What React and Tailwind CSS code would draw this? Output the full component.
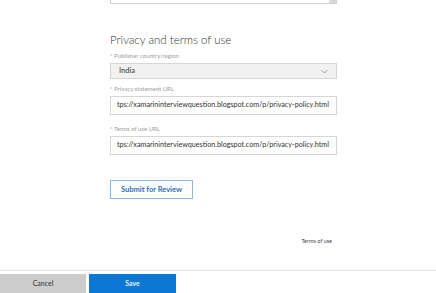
export default function App() {
  const font = { fontFamily: 'Lato, "Open Sans", sans-serif' };
  return (
    <div className="w-[436px] h-[293px] bg-white flex flex-col overflow-hidden relative" style={font}>
      <div className="flex-1 flex flex-col pl-[110px] pr-[99px]">
        <div className="h-[4px] border border-t-0 border-[#d0d0d0] relative">
          <div className="absolute right-[0px] top-0 w-[7px] h-[3px] bg-[#d8d8d8]"></div>
        </div>
        <div className="mt-[27px] text-[11.5px] leading-[18px] text-[#333] font-light">Privacy and terms of use</div>
        <div className="mt-[3px] text-[6px] leading-[8px] text-[#a0a0a0]">* Publisher country/region</div>
        <div className="mt-[3px] h-[16px] bg-[#f1f1f1] border border-[#d6d6d6] flex items-center justify-between pl-[8px] pr-[8px]">
          <span className="text-[7.5px] text-[#333]">India</span>
          <svg width="7" height="5" viewBox="0 0 7 5"><path d="M0.5 1 L3.5 4 L6.5 1" fill="none" stroke="#888" strokeWidth="0.8" /></svg>
        </div>
        <div className="mt-[6px] text-[6px] leading-[8px] text-[#a0a0a0]">* Privacy statement URL</div>
        <div className="mt-[3px] h-[19px] border border-[#d6d6d6] flex items-center pl-[6px] overflow-hidden whitespace-nowrap">
          <span className="text-[7.2px] text-[#333]">tps://xamarininterviewquestion.blogspot.com/p/privacy-policy.html</span>
        </div>
        <div className="mt-[10px] text-[6px] leading-[8px] text-[#a0a0a0]">* Terms of use URL</div>
        <div className="mt-[3px] h-[19px] border border-[#d6d6d6] flex items-center pl-[6px] overflow-hidden whitespace-nowrap">
          <span className="text-[7.2px] text-[#333]">tps://xamarininterviewquestion.blogspot.com/p/privacy-policy.html</span>
        </div>
        <div className="mt-[25px]">
          <button className="w-[83px] h-[19px] border border-[#8ab8e6] text-[#2f6cb5] text-[7.5px] font-bold flex items-center justify-center">Submit for Review</button>
        </div>
        <div className="mt-[38px] flex justify-end pr-[5px]">
          <span className="text-[5.5px] text-[#444]">Terms of use</span>
        </div>
      </div>
      <div className="h-[1px] bg-[#e4e4e4] mb-[3px]"></div>
      <div className="h-[19px] flex gap-[3px]">
        <button className="w-[86px] h-full bg-[#cccccc] text-[7px] text-[#333]">Cancel</button>
        <button className="w-[87px] h-full bg-[#0a78d4] text-[7px] text-white font-semibold">Save</button>
      </div>
    </div>
  );
}
